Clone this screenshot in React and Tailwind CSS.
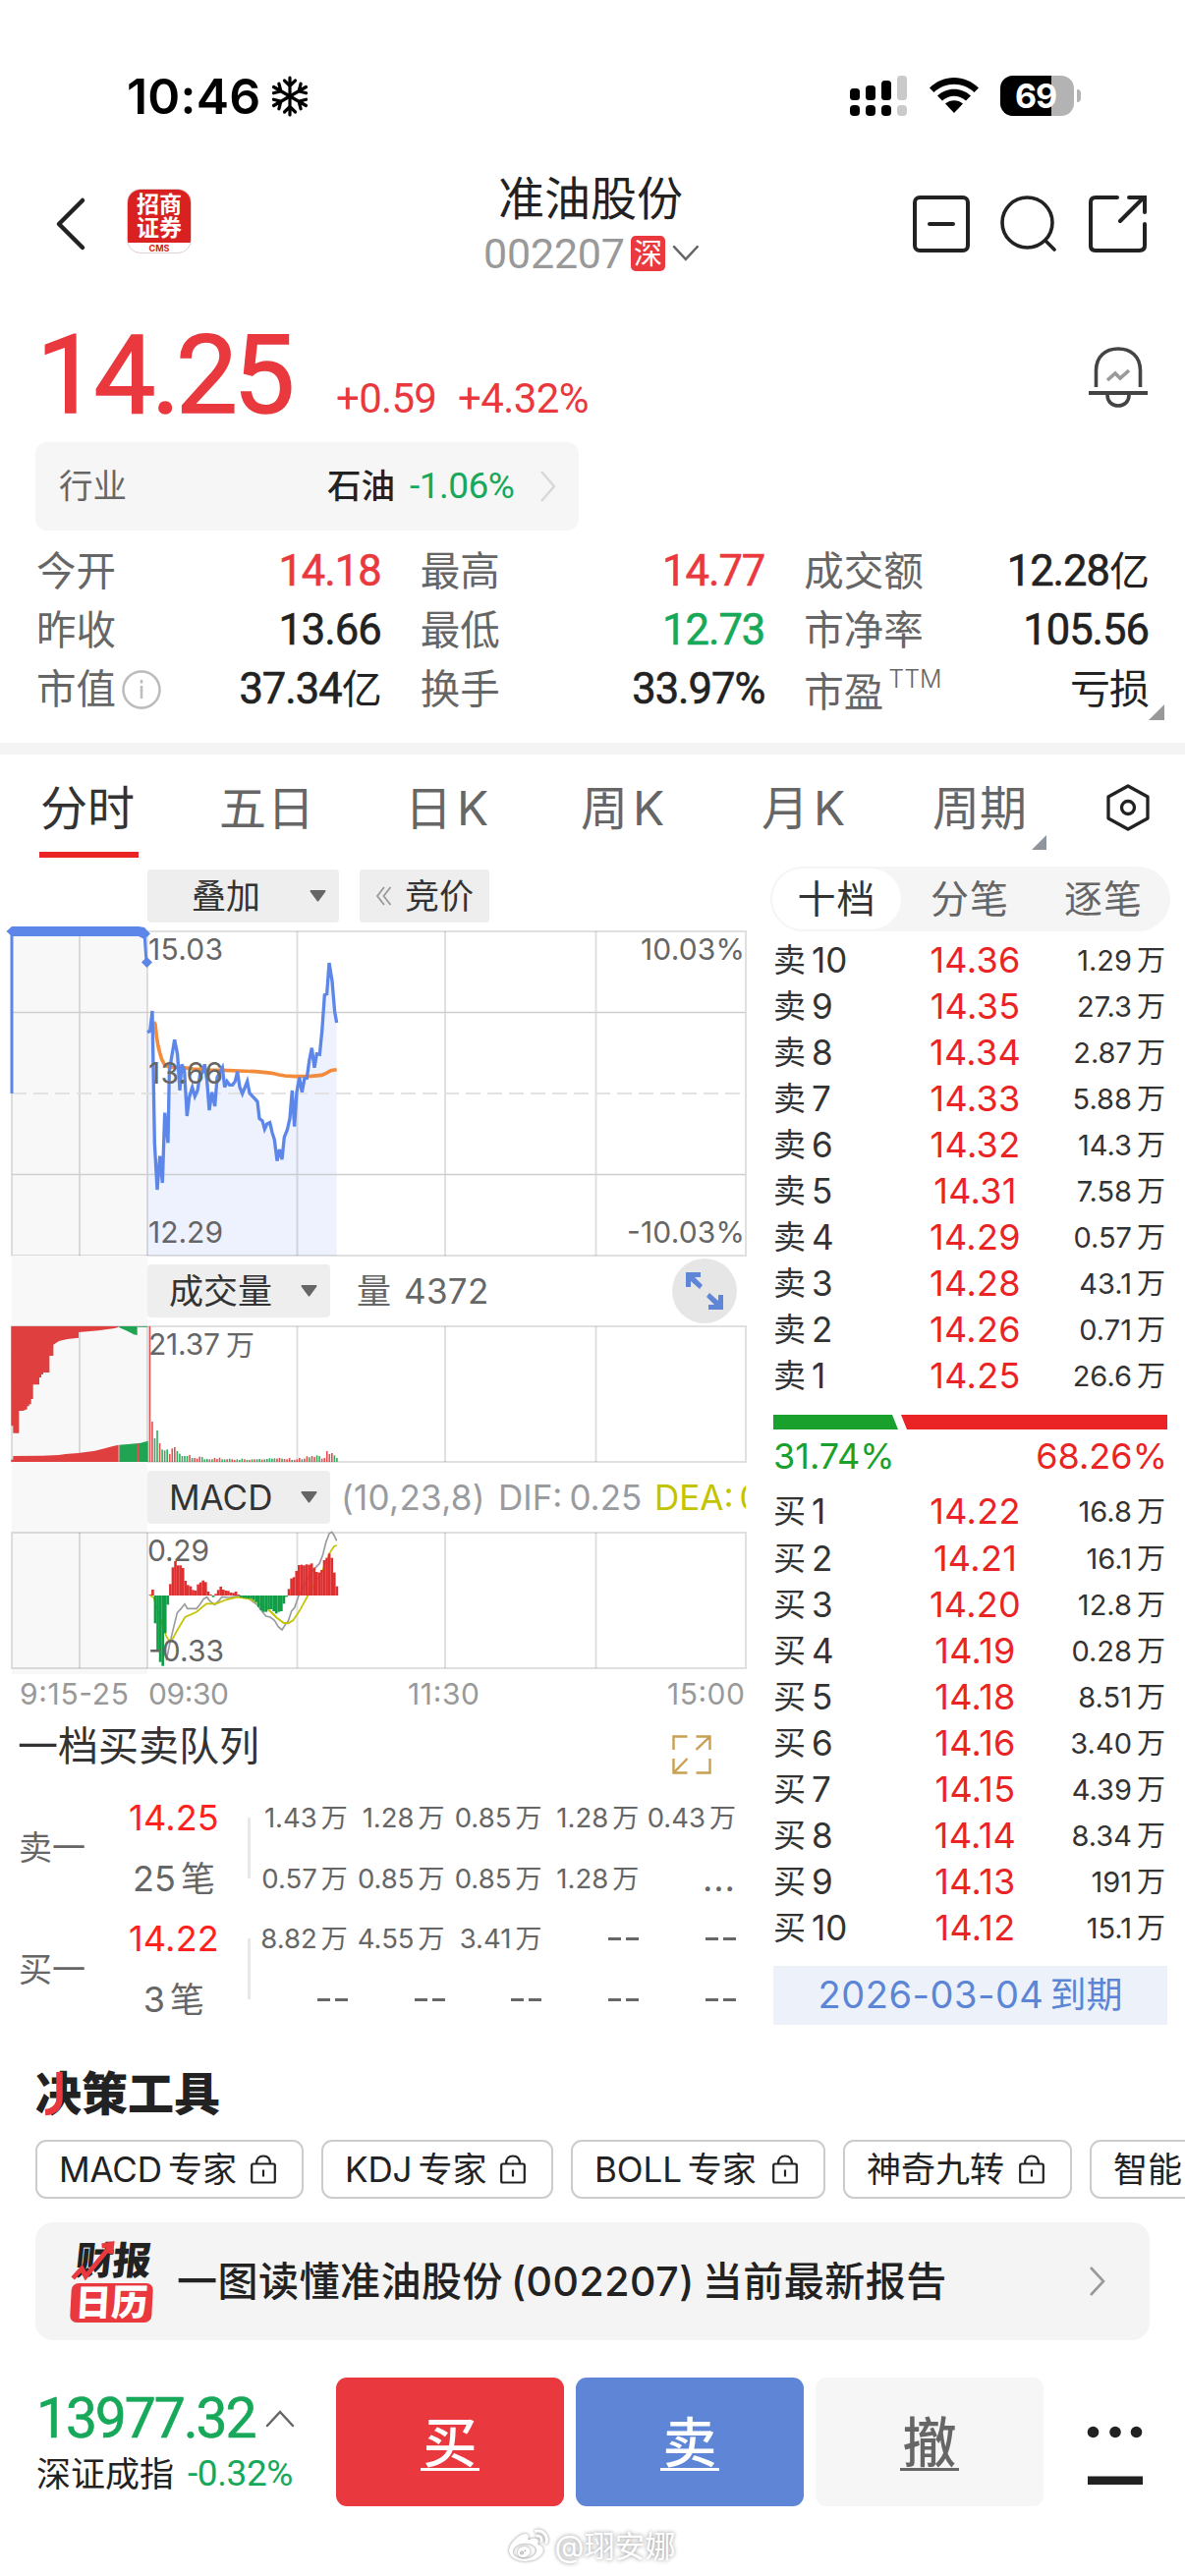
import React from 'react';
import { FaWeibo } from 'react-icons/fa';

const RED = '#de3031';
const GREEN = '#0f9d46';

const sells = [
    ['10', '14.36', '1.29'], ['9', '14.35', '27.3'], ['8', '14.34', '2.87'], ['7', '14.33', '5.88'],
    ['6', '14.32', '14.3'], ['5', '14.31', '7.58'], ['4', '14.29', '0.57'], ['3', '14.28', '43.1'],
    ['2', '14.26', '0.71'], ['1', '14.25', '26.6'],
];
const buys = [
    ['1', '14.22', '16.8'], ['2', '14.21', '16.1'], ['3', '14.20', '12.8'], ['4', '14.19', '0.28'],
    ['5', '14.18', '8.51'], ['6', '14.16', '3.40'], ['7', '14.15', '4.39'], ['8', '14.14', '8.34'],
    ['9', '14.13', '191'], ['10', '14.12', '15.1'],
];
const queues = [
    { side: '卖一', price: '14.25', count: '25', rows: [['1.43', '1.28', '0.85', '1.28', '0.43'], ['0.57', '0.85', '0.85', '1.28', '...']] },
    { side: '买一', price: '14.22', count: '3', rows: [['8.82', '4.55', '3.41', '--', '--'], ['--', '--', '--', '--', '--']] },
];

const priceLine = '60,362 68,358 75,297 82,700 90,843 98,740 106,822 113,608 123,700 127,480 143,385 152,430 159,540 165,460 173,478 181,618 188,560 197,530 205,558 213,540 221,490 228,485 235,460 242,510 249,600 257,545 266,588 273,500 289,470 296,530 303,512 311,523 320,523 328,512 335,482 342,530 350,550 365,512 372,548 396,574 402,626 411,632 418,658 425,642 434,638 441,668 448,690 456,755 463,720 471,750 478,682 487,660 495,625 502,540 509,650 516,545 524,500 532,545 540,502 547,502 554,450 562,410 570,470 577,428 586,430 593,360 601,248 608,245 615,150 624,205 632,300 638,333';
const avgLine = '80,330 84,338 88,375 93,405 98,425 104,445 112,460 125,468 170,470 200,474 240,477 290,478 340,480 390,482 420,485 440,487 462,492 480,495 510,497 560,496 592,493 606,487 620,479 630,477 638,477';

// minute volumes: sign gives the colour
const volumes = [
    414, 123, -72, -96, 57, -38, -35, -38, 24, 41, 45, -33, -25, -18, -18, -18, 21, -12, 12, 10, 16, -15, -8, -9, 8, -8, 12, 9,
    13, -8, -8, 8, -10, 8, 6, -8, -6, -10, 8, -6, 6, -8, 8, -8, -9, 7, -8, -9, -11, -10, -11, 10, 12, -10, 9, 8, 12, -6, 6, 8, 12,
    -8, 10, 17, -14, 18, 15, -20, -18, 10, 12, 33, 24, 27, -20, -12,
];
const macdBars = [
    2, 18, -85, -168, -203, -215, -115, -28, 35, 86, 105, 92, 92, 84, 45, 32, 28, 17, 15, 34, 40, 46, 41, 12, 3, -5, 5, 17, 27, 18,
    15, 14, 9, 8, 12, 3, -5, -7, -8, -9, -10, -14, -20, -35, -45, -50, -50, -42, -42, -48, -55, -50, -48, -25, -4, 20, 52, 56, 75,
    93, 94, 92, 95, 94, 98, 85, 72, 70, 78, 108, 115, 128, 115, 70, 28,
];

const Grid = ({ h }) => (
    <g stroke="#000" strokeOpacity="0.12" strokeWidth="2" fill="none">
        <rect x="12" y="0" width="747" height={h} />
        {[81, 150, 302.5, 453, 606.5].map((x) => <line key={x} x1={x} x2={x} y1="0" y2={h} />)}
    </g>
);

const Label = ({ x, y, w, children, end, fill = '#666' }) => (
    <text x={x} y={y} fontSize="30" fill={fill} textLength={w} textAnchor={end ? 'end' : 'start'}>{children}</text>
);

const PriceChart = () => (
    <svg width="784" height="330" className="block overflow-visible">
        <rect x="12" y="0" width="138" height="330" fill="#f8f8f8" />
        <g transform="translate(130,-18) scale(0.33333)">
            <polygon points={priceLine + ' 638,1044 60,1044'} fill="#edf2fe" />
        </g>
        <Grid h={330} />
        <path d="M12 82.5H759M12 247.5H759" stroke="#cdcdcd" strokeWidth="1.6" />
        <path d="M12 165H759" stroke="#e2e2e2" strokeWidth="2" strokeDasharray="15 7" />
        <g transform="translate(130,-18) scale(0.33333)" fill="none" strokeLinejoin="miter">
            <polyline points={avgLine} stroke="#f28b3c" strokeWidth="11" />
            <polyline points={priceLine} stroke="#5c86e8" strokeWidth="10" />
        </g>
        <path d="M12 165V0M147 2L149 32" stroke="#5c86e8" strokeWidth="3" fill="none" />
        <path d="M6.500 0L12 -5H141L147 -4L153 2.500L147 8L141 5H12ZM149.500 26L155 31.500L149.500 37L144 31.500Z" fill="#5c86e8" />
        <Label x="151" y="29" w="76">15.03</Label>
        <Label x="151" y="154.500" w="76">13.66</Label>
        <Label x="151" y="317" w="76">12.29</Label>
        <Label x="758" y="29" w="106" end>10.03%</Label>
        <Label x="758" y="317" w="120" end>-10.03%</Label>
    </svg>
);

const VolumeChart = () => (
    <svg width="784" height="138" className="block overflow-visible">
        <defs>
            <pattern id="stripe" width="2.6" height="10" patternUnits="userSpaceOnUse">
                <rect width="1" height="10" fill="#fff" fillOpacity="0.18" />
            </pattern>
        </defs>
        <rect x="12" y="0" width="138" height="138" fill="#f8f8f8" />
        <Grid h={138} />
        {['', 'url(#stripe)'].map((f) => (
            <g key={f} transform="translate(0,-10) scale(0.33333)">
                <path fill={f || RED} d="M34 30V334H40V356H58V288H70L83 283V274H89V268H95V252H101V208H120V186H126V177H132V171H151V120H163V86L180 75L205 69L240 65V48L300 43L350 36L362 32V30Z" />
                <path fill={f || GREEN} d="M364 30V34L385 43L400 50L408 55L419 57V30ZM421 30V32H450V30Z" />
                <path fill={f || RED} d="M34 444V437H40V426L130 425L180 423L200 420L240 417L290 410L320 403L345 396L362 392V444Z" />
                <path fill={f || GREEN} d="M364 444V392L400 389L430 386L440 383L452 380V444Z" />
                <path fill={f || RED} d="M419 388H425V444H419Z" />
            </g>
        ))}
        {volumes.map((v, i) => (
            <rect key={i} x={151.600 + i * 2.54} y={138 - Math.abs(v) / 3} width="1.600" height={Math.abs(v) / 3} fill={v > 0 ? RED : GREEN} fillOpacity="0.85" />
        ))}
        <Label x="151" y="29" w="73">21.37</Label>
        <text x="230" y="29.500" fontSize="29" fill="#666">万</text>
    </svg>
);

const MacdChart = () => (
    <svg width="784" height="138" className="block overflow-visible">
        <rect x="12" y="0" width="138" height="144" fill="#f8f8f8" />
        <Grid h={138} />
        <g transform="translate(0,-220) scale(0.33333)" fill="none" strokeWidth="5">
            <polyline stroke="#999b9f" points="508,1050 518,1000 530,950 541,905 552,893 564,878 572,892 600,892 610,880 622,862 632,857 640,868 655,880 668,868 678,856 700,858 730,852 760,862 785,880 800,900 812,915 825,918 838,928 850,948 861,957 872,940 880,930 890,900 900,888 912,852 940,800 960,770 975,755 985,730 995,690 1005,663 1013,658 1020,668 1028,685" />
            <polyline stroke="#c3c400" points="458,850 470,860 507,975 515,988 525,988 540,960 565,918 600,902 630,877 660,877 690,865 725,857 760,862 790,875 820,895 845,920 865,935 880,937 895,928 915,898 940,852 985,775 1005,725 1020,702 1028,699" />
        </g>
        {macdBars.map((v, i) => (
            <rect key={i} x={151.500 + i * 2.568} y={v > 0 ? 64 - v / 3 : 64} width="2.650" height={Math.abs(v) / 3} fill={v > 0 ? RED : GREEN} />
        ))}
        <polyline transform="translate(0,-220) scale(0.33333)" fill="none" stroke="#c3c400" strokeWidth="5" points="820,895 845,920 865,935 880,937" />
        <Label x="150" y="29" w="63">0.29</Label>
        <Label x="151" y="131" w="77">-0.33</Label>
    </svg>
);

const Drop = () => (
    <svg width="17" height="12" className="block"><path d="M1 0H16Q17 1 16 2L9 11.500H8L1 2Q0 1 1 0Z" fill="#666" /></svg>
);

const Lock = () => (
    <svg width="26" height="30" viewBox="0 0 26 30" fill="none" stroke="#222" strokeWidth="2.2" className="shrink-0">
        <rect x="1.200" y="9.500" width="23.600" height="19" rx="1.500" />
        <path d="M6 9.500C6 4 9 1.500 13 1.500S20 4 20 9.500M13 15.500V22.500" />
    </svg>
);

const StatusBar = () => (
    <div className="flex h-[163px] shrink-0 items-start pl-[129px] pr-[106px] pt-[77px]">
        <div className="h-[42px] w-[148px] text-[50px] font-semibold leading-[42px] tracking-[0.2px] text-black">10:46</div>
        <svg width="36" height="42" viewBox="0 0 36 42" fill="none" stroke="#000" strokeWidth="3.200" strokeLinecap="round">
            {[0, 60, 120, 180, 240, 300].map((a) => (
                <path key={a} transform={`rotate(${a} 18 21)`} d="M18 21V2M12.500 5L18 10.500L23.500 5" />
            ))}
        </svg>
        <svg width="58" height="42" viewBox="0 0 58 42" className="ml-auto">
            {[[0, 13, 12], [16, 10, 15], [32, 5, 20], [48, 0, 25]].map(([x, y, h], i) => (
                <g key={x} fill={i === 3 ? '#cacaca' : '#000'}>
                    <rect x={x} y={y} width="10" height={h} rx="3.500" />
                    <rect x={x} y="30" width="10" height="11" rx="4" />
                </g>
            ))}
        </svg>
        <svg width="52" height="40" viewBox="0 0 52 40" className="ml-[22px]">
            <path d="M1 12.500C15 -1.500 37 -1.500 51 12.500L46.500 17C35 6 17 6 5.500 17Z" />
            <path d="M9 20.500C18.500 11.500 33.500 11.500 43 20.500L38 25.500C31 19 21 19 14 25.500Z" />
            <path d="M17 28.500C22 24 30 24 35 28.500L26 38Z" />
        </svg>
        <div className="relative ml-[21px] flex h-[41px] w-[75px] items-center justify-center overflow-hidden rounded-[13px] bg-[#b3b3b3]">
            <div className="absolute left-0 top-0 h-full w-[52px] bg-black" />
            <span className="relative mr-[3px] text-[34px] font-bold leading-none tracking-[-1px] text-white">69</span>
        </div>
        <div className="ml-[3px] mt-[14px] h-[13px] w-[4px] rounded-r-full bg-[#b3b3b3]" />
    </div>
);

const Header = () => (
    <div className="flex h-[155px] shrink-0 items-start pl-[56px] pr-[39px]">
        <svg width="32" height="56" viewBox="0 0 32 56" className="mt-[37px]" fill="none" stroke="#222" strokeWidth="4.500" strokeLinecap="round" strokeLinejoin="round">
            <path d="M28 4L4 28L28 52" />
        </svg>
        <div className="ml-[41px] mt-[29px] flex h-[66px] w-[66px] flex-col items-center overflow-hidden rounded-[14px] border border-[#e3cfcf] bg-white">
            <div className="flex h-[54px] w-[66px] shrink-0 flex-col items-center justify-center bg-[#d92122] text-[23px] font-bold leading-[24px] text-white">
                <span>招商</span>
                <span>证券</span>
            </div>
            <div className="text-[9px] font-bold leading-[11px] text-[#d92122]">CMS</div>
        </div>
        <div className="ml-[297px] flex w-[220px] flex-col">
            <div className="mt-[11px] h-[56px] pl-[15px] text-[47px] leading-[56px] text-[#222]">准油股份</div>
            <div className="mt-[7px] flex h-[42px] items-center">
                <span className="w-[151px] font-['Roboto'] text-[43px] leading-[42px] tracking-[-0.2px] text-[#999]">002207</span>
                <span className="flex h-[36px] w-[36px] items-center justify-center rounded-[5px] bg-[#e9393e] text-[29px] leading-none text-white">深</span>
                <svg width="28" height="18" viewBox="0 0 28 18" className="ml-[7px]" fill="none" stroke="#666" strokeWidth="2.500" strokeLinecap="round"><path d="M2 2L14 15L26 2" /></svg>
            </div>
        </div>
        <div className="ml-auto mt-[36px] flex gap-[31px]" >
            <svg width="58" height="58" viewBox="0 0 58 58" fill="none" stroke="#222" strokeWidth="4" strokeLinecap="round">
                <rect x="2" y="2" width="54" height="54" rx="5" />
                <path d="M17 29H41" />
            </svg>
            <svg width="58" height="58" viewBox="0 0 58 58" fill="none" stroke="#222" strokeWidth="3.600" strokeLinecap="round">
                <circle cx="27.500" cy="27.500" r="25.500" />
                <path d="M46 46L55 55" />
            </svg>
            <svg width="60" height="58" viewBox="0 0 60 58" fill="none" stroke="#222" strokeWidth="4" strokeLinecap="round">
                <path d="M30 2H8Q3 2 3 7V51Q3 56 8 56H52Q58 56 58 51V29M33 26L57 2M42 2H58V17" />
            </svg>
        </div>
    </div>
);

const Quote = ({ label, value, color = 'text-[#222]' }) => (
    <div className="flex h-[60px] items-center justify-between">
        <span className="flex items-center text-[40.500px] leading-[60px] text-[#666]">{label}</span>
        <span className={`${color} whitespace-nowrap font-['Roboto','Noto_Sans_CJK_SC'] text-[43.500px] leading-[60px] tracking-[-1px] [-webkit-text-stroke:0.6px_currentColor]`}>{value}</span>
    </div>
);

const Yi = () => <span className="text-[41px] [-webkit-text-stroke:0]">亿</span>;

const Summary = () => (
    <div className="shrink-0 px-[37px]">
        <div className="flex h-[132px] items-start">
            <span className="w-[305px] font-['Roboto'] text-[112px] leading-[128px] tracking-[-4.5px] text-[#e9393e] [-webkit-text-stroke:1.5px_#e9393e]">14.25</span>
            <span className="mt-[64px] w-[124px] font-['Roboto'] text-[42px] leading-[48px] tracking-[-0.7px] text-[#e9393e]">+0.59</span>
            <span className="mt-[64px] font-['Roboto'] text-[42px] leading-[48px] tracking-[-0.6px] text-[#e9393e]">+4.32%</span>
            <svg width="62" height="62" viewBox="0 0 62 62" className="ml-auto mt-[35px]" fill="none" stroke="#444" strokeWidth="3.600">
                <path d="M8.500 41V24C8.500 10 18 2 31 2S53.500 10 53.500 24V41" />
                <path d="M1 47H61" strokeWidth="4" />
                <path d="M20 49C20 56 25 60 31 60S42 56 42 49" />
                <path d="M20 34L28 27L33 32L42 24" stroke="#999" />
            </svg>
        </div>
        <div className="-ml-px flex h-[90px] w-[553px] items-center rounded-[12px] bg-[#f6f6f6] pl-[24px] text-[34.500px] text-[#666]">
            <span className="w-[273px]">行业</span>
            <span className="w-[84px] font-medium text-[#222]">石油</span>
            <span className="w-[133px] font-['Roboto'] text-[37px] tracking-[-0.5px] text-[#17a85a]">-1.06%</span>
            <svg width="16" height="32" viewBox="0 0 16 32" fill="none" stroke="#d8d8d8" strokeWidth="2.500"><path d="M1 1L14 16L1 31" /></svg>
        </div>
        <div className="relative mt-[12px] grid h-[204px] grid-cols-3 content-start gap-x-[40px]">
            <Quote label="今开" value="14.18" color="text-[#e9393e]" />
            <Quote label="最高" value="14.77" color="text-[#e9393e]" />
            <Quote label="成交额" value={<>12.28<Yi /></>} />
            <Quote label="昨收" value="13.66" />
            <Quote label="最低" value="12.73" color="text-[#17a85a]" />
            <Quote label="市净率" value="105.56" />
            <Quote
                label={<>市值<svg width="40" height="40" viewBox="0 0 40 40" className="ml-[6px]" fill="none" stroke="#bbb" strokeWidth="2.500"><circle cx="20" cy="20" r="18.500" /><path d="M20 16V29M20 10V13.500" /></svg></>}
                value={<>37.34<Yi /></>}
            />
            <Quote label="换手" value="33.97%" />
            <Quote label={<><span className="mt-[6px]">市盈</span><span className="mb-[22px] ml-[5px] font-['Inter'] text-[25px] font-light leading-none">TTM</span></>} value={<span className="text-[41px] [-webkit-text-stroke:0]">亏损</span>} />
            <svg width="16" height="16" className="absolute -right-[16px] top-[165px]"><path d="M16 0V16H0Z" fill="#999" /></svg>
        </div>
    </div>
);

const Tabs = () => (
    <div className="flex h-[110px] shrink-0 items-start pl-[41px] text-[48px] leading-[109px] text-[#666]">
        <div className="relative w-[182px] text-[#333]">分时<div className="absolute -left-px top-[99px] h-[6px] w-[101px] bg-[#ea2424]" /></div>
        <div className="w-[189px] tracking-[1px]">五日</div>
        <div className="w-[179px]">日<span className="ml-[5px]">K</span></div>
        <div className="w-[184px]">周<span className="ml-[5px]">K</span></div>
        <div className="w-[174px]">月<span className="ml-[5px]">K</span></div>
        <div className="relative w-[176px]">周期<svg width="15" height="15" className="absolute left-[101px] top-[82px]"><path d="M15 0V15H0Z" fill="#8f959c" /></svg></div>
        <svg width="46" height="48" viewBox="0 0 46 48" className="mt-[30px]" fill="none" stroke="#222" strokeWidth="3.300" strokeLinejoin="round">
            <path d="M23 2L43 13V35L23 46L3 35V13Z" />
            <circle cx="23" cy="24" r="6.500" />
        </svg>
    </div>
);

const SubHeader = ({ name, children }) => (
    <div className="flex h-[72px] items-stretch pl-[12px]">
        <div className="w-[138px] bg-[#f8f8f8]" />
        <div className="my-[9px] flex w-[186px] items-center justify-between rounded-[4px] bg-[#eee] pl-[22px] pr-[13px] text-[35px] text-[#333]">
            <span>{name}</span><Drop />
        </div>
        {children}
    </div>
);

const Dashes = () => (
    <span className="inline-flex h-[62px] items-center gap-[5px] align-top">
        <i className="h-[3px] w-[13px] bg-[#666]" />
        <i className="h-[3px] w-[13px] bg-[#666]" />
    </span>
);

const Queue = ({ q }) => (
    <div className="flex h-[123.500px] items-center pl-[19px]">
        <div className="w-[68px] text-[34px] text-[#666]">{q.side}</div>
        <div className="ml-[27px] w-[126px] text-center text-[36px]">
            <div className="h-[62px] leading-[62px] tracking-[0.2px] text-[#ff2020]">{q.price}</div>
            <div className="h-[62px] leading-[62px] text-[#666]">{q.count}<span className="ml-[5px] text-[35px]">笔</span></div>
        </div>
        <div className="ml-[12px] h-[62px] w-[3px] bg-[#e8e8e8]" />
        <div className="w-[494px]">
            {q.rows.map((r, i) => (
                <div key={i} className="grid h-[62px] grid-cols-5 text-right text-[27.500px] leading-[62px] text-[#666]">
                    {r.map((c, j) => (
                        <span key={j} className={c === '...' ? 'text-[36px] tracking-[1px]' : 'whitespace-nowrap'}>
                            {c === '--' ? <Dashes /> : c}
                            {c.length === 4 && <span className="ml-[4px] text-[27px]">万</span>}
                        </span>
                    ))}
                </div>
            ))}
        </div>
    </div>
);

const Level = ({ side, row }) => (
    <div className="flex h-[47.050px] items-center text-[#333]">
        <span className="w-[39px] text-[33px] leading-[47px]">{side}</span>
        <span className="w-[73px] text-[35px] leading-[47px]">{row[0]}</span>
        <span className="w-[187px] text-center text-[36px] leading-[47px] tracking-[0.3px] text-[#ea2424]">{row[1]}</span>
        <span className="flex-1 text-right text-[29px] leading-[47px]">{row[2]}</span>
        <span className="ml-[5px] text-[29px] leading-[47px]">万</span>
    </div>
);

const OrderBook = () => (
    <div className="w-[407px]">
        <div className="flex h-[66px] rounded-full bg-[#f5f5f5] p-[2px] text-center text-[39px] leading-[62px] tracking-[1px] text-[#666]">
            <div className="w-[131px] rounded-full bg-white text-[#333]">十档</div>
            <div className="w-[136px] pl-[4px]">分笔</div>
            <div className="w-[136px] pl-[4px]">逐笔</div>
        </div>
        <div className="mt-[6px] pl-[3px] pr-[5px]">{sells.map((r) => <Level key={r[0]} side="卖" row={r} />)}</div>
        <svg width="401" height="15" className="ml-[3px] mt-[16px] block">
            <path d="M0 0H121L127 15H0Z" fill="#1aa02c" />
            <path d="M130 0H401V15H136Z" fill="#ea2424" />
        </svg>
        <div className="flex h-[60px] items-center justify-between pb-[7px] pl-[3px] pr-[3px] text-[36px]">
            <span className="text-[#1aa02c]">31.74%</span>
            <span className="text-[#ea2424]">68.26%</span>
        </div>
        <div className="pl-[3px] pr-[5px]">{buys.map((r) => <Level key={r[0]} side="买" row={r} />)}</div>
        <div className="ml-[3px] mt-[15px] flex h-[60px] w-[401px] items-center justify-center bg-[#edf2fa] text-[38px] text-[#5c85d6]">
            <span className="tracking-[0.5px]">2026-03-04</span><span className="ml-[6px] text-[37px]">到期</span>
        </div>
    </div>
);

const Tools = () => (
    <div className="shrink-0 pl-[36px]">
        <div className="flex h-[100px] pt-[22px] text-[47px] font-black leading-[62px] text-[#222]">
            <span className="relative h-[62px]">决<svg width="24" height="46" viewBox="0 0 24 46" className="absolute left-[9px] top-[9px]" fill="none" stroke="#e9393e" strokeWidth="6.500"><path d="M15.500 0V26Q15.500 40 1 41" /></svg></span>策工具
        </div>
        <div className="flex gap-[18px] overflow-hidden">
            {[['MACD', '专家', 'w-[273px]'], ['KDJ', '专家', 'w-[236px]'], ['BOLL', '专家', 'w-[259px]'], ['', '神奇九转', 'w-[233px]'], ['', '智能', 'w-[232px]']].map(([a, b, w]) => (
                <div key={a + b} className={`${w} flex h-[60px] shrink-0 items-center justify-between whitespace-nowrap rounded-[11px] border-2 border-[#ccc] pl-[22px] pr-[26px] text-[35px] text-[#222]`}>
                    <span className="flex items-center">{a && <span className="mr-[6px] tracking-[-0.1px]">{a}</span>}{b}</span>
                    <Lock />
                </div>
            ))}
        </div>
        <div className="mt-[24px] flex h-[120px] w-[1134px] items-center rounded-[18px] bg-[#f4f4f4] pl-[36px] pr-[45px]">
            <div className="flex w-[86px] flex-col gap-[3px]">
                <div className="relative -skew-x-6 text-center text-[39px] font-black leading-[40px] tracking-[-1px] text-[#222]">
                    财报
                    <svg width="42" height="40" viewBox="0 0 42 40" className="absolute left-[2px] top-0" fill="none" stroke="#e9393e" strokeWidth="5"><path d="M2 38L10 28L15 36L37 5M28 5L38 3V13" /></svg>
                </div>
                <div className="h-[40px] w-[83px] -skew-x-3 rounded-[7px] bg-[#e9393e] text-center text-[37px] font-black leading-[39px] text-white">日历</div>
            </div>
            <div className="ml-[22px] mt-[2px] whitespace-nowrap text-[41px] font-medium tracking-[0.5px] text-[#222]">一图读懂准油股份<span className="mx-[8px]">(002207)</span>当前最新报告</div>
            <svg width="17" height="32" viewBox="0 0 17 32" className="ml-auto" fill="none" stroke="#999" strokeWidth="2.600"><path d="M2 2L15 16L2 30" /></svg>
        </div>
    </div>
);

const BottomBar = () => (
    <div className="mt-[38px] flex h-[131px] shrink-0 pl-[37px]">
        <div className="w-[305px] pt-[12px]">
            <div className="flex items-center">
                <span className="w-[233px] font-['Roboto'] text-[57px] leading-[60px] tracking-[-2.1px] text-[#17a85a] [-webkit-text-stroke:0.6px_#17a85a]">13977.32</span>
                <svg width="30" height="18" viewBox="0 0 30 18" fill="none" stroke="#666" strokeWidth="2.500" strokeLinecap="round"><path d="M2 16L15 2L28 16" /></svg>
            </div>
            <div className="flex items-center whitespace-nowrap text-[35px] leading-[52px] text-[#222]">
                <span className="w-[154px]">深证成指</span>
                <span className="font-['Roboto'] text-[37px] tracking-[-0.4px] text-[#17a85a]">-0.32%</span>
            </div>
        </div>
        <div className="flex gap-[12px] text-center text-[55px] font-medium leading-[62px]">
            {[['买', 'bg-[#e9393e] text-white', 'border-white'], ['卖', 'bg-[#5f86d6] text-white', 'border-white'], ['撤', 'bg-[#f6f6f6] text-[#666]', 'border-[#666]']].map(([t, c, b]) => (
                <div key={t} className={`${c} h-[131px] w-[232px] rounded-[11px] pt-[35px]`}>
                    <span className={`${b} inline-block h-[60px] w-[60px] border-b-[3px]`}>{t}</span>
                </div>
            ))}
        </div>
        <svg width="58" height="60" viewBox="0 0 58 60" className="ml-[44px] mt-[49px]" fill="#222">
            <circle cx="6.500" cy="6.500" r="5.800" /><circle cx="29" cy="6.500" r="5.800" /><circle cx="50.500" cy="6.500" r="5.800" />
            <rect x="1" y="51.500" width="56" height="8.500" />
        </svg>
    </div>
);

const App = () => {
    return (
        <div className="flex h-[2622px] w-[1206px] flex-col overflow-hidden bg-white font-['Inter','Noto_Sans_CJK_SC',sans-serif]">
            <StatusBar />
            <Header />
            <Summary />
            <div className="h-[12px] shrink-0 bg-[#f4f4f4]" />
            <Tabs />
            <div className="flex h-[1200px] shrink-0 items-start">
                <div className="w-[784px]">
                    <div className="flex h-[70px] gap-[21px] pl-[150px] pt-[7px] text-[35px] text-[#333]">
                        <div className="flex h-[54px] w-[195px] items-center justify-between rounded-[4px] bg-[#eee] pl-[45px] pr-[13px]">叠加<Drop /></div>
                        <div className="flex h-[54px] w-[132px] items-center rounded-[4px] bg-[#eee] pl-[16px]">
                            <svg width="17" height="20" viewBox="0 0 17 20" className="mr-[13px]" fill="none" stroke="#999" strokeWidth="1.800"><path d="M9 1L2 10L9 19M15.500 1L8.500 10L15.500 19" /></svg>
                            竞价
                        </div>
                    </div>
                    <PriceChart />
                    <SubHeader name="成交量">
                        <span className="ml-[27px] text-[35px] leading-[72px] text-[#666]">量<span className="ml-[13px] tracking-[0.3px]">4372</span></span>
                        <div className="ml-auto mr-[34px] mt-[3px] flex h-[66px] w-[66px] items-center justify-center rounded-full bg-[#e6e6e6]">
                            <svg width="40" height="40" viewBox="0 0 40 40" fill="#5f86d6"><path d="M1 1H16V6H10L18 14L15 18L6 10V16H1ZM39 39H24V34H30L22 26L25 22L34 30V24H39Z" /></svg>
                        </div>
                    </SubHeader>
                    <VolumeChart />
                    <SubHeader name="MACD">
                        <div className="flex w-[423px] overflow-hidden whitespace-nowrap pl-[11px] text-[35px] leading-[72px] text-[#999b9f]">
                            <span className="w-[160px] shrink-0 tracking-[0.3px]">(10,23,8)</span>
                            <span className="w-[159px] shrink-0">DIF:<span className="ml-[7px]">0.25</span></span>
                            <span className="shrink-0 text-[#c3c400]">DEA:<span className="ml-[6px]">0</span></span>
                        </div>
                    </SubHeader>
                    <MacdChart />
                    <svg width="784" height="48" className="block">
                        <Label x="20" y="36.500" w="111" fill="#999">9:15-25</Label>
                        <Label x="151" y="36.500" w="82" fill="#999">09:30</Label>
                        <Label x="415" y="36.500" w="73" fill="#999">11:30</Label>
                        <Label x="758" y="36.500" w="79" end fill="#999">15:00</Label>
                    </svg>
                    <div className="flex h-[73px] items-start justify-between pl-[18px] pr-[60px] text-[41px] leading-[62px] text-[#333]">
                        一档买卖队列
                        <svg width="40" height="40" viewBox="0 0 40 40" className="mt-[20px]" fill="none" stroke="#c9a050" strokeWidth="2.400">
                            <path d="M1.500 15V1.500H15.500M24.500 1.500H38.500V15M38 2L24.500 15M38.500 24V38.500H24.500M15.500 38.500H1.500V24M2 38L15.500 24" />
                        </svg>
                    </div>
                    {queues.map((q) => <Queue key={q.side} q={q} />)}
                </div>
                <div className="pt-[4px]"><OrderBook /></div>
            </div>
            <Tools />
            <BottomBar />
            <div className="mt-[16px] flex items-center justify-center gap-[6px] pr-[2px] text-[31px] leading-[50px] text-white [text-shadow:0_0_4px_#888]">
                <FaWeibo className="h-[40px] w-[42px] [filter:drop-shadow(0_0_1.500px_#888)]" />
                <span>@珝安娜</span>
            </div>
        </div>
    );
};

export default App;
